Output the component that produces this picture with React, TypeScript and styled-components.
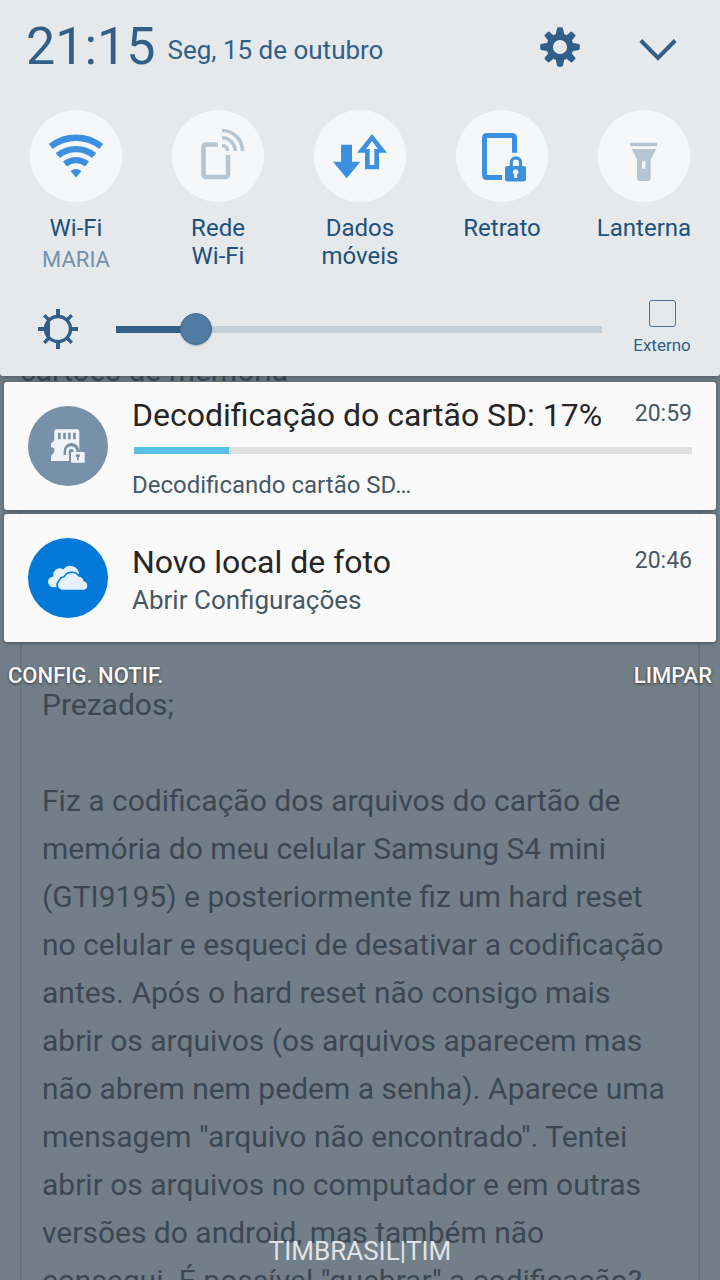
import React, { useState } from "react";
import styled, { createGlobalStyle } from "styled-components";

const GlobalStyle = createGlobalStyle`
  *, *::before, *::after { box-sizing: border-box; }
  body {
    margin: 0;
    background: #727f88;
    font-family: Roboto, "Noto Sans", sans-serif;
  }
  h1, h2, p { margin: 0; font-weight: 400; }
  button {
    padding: 0;
    border: 0;
    background: none;
    font: inherit;
    color: inherit;
    cursor: pointer;
  }
`;

const Screen = styled.div`
  position: relative;
  height: 100vh;
  overflow: hidden;
`;

/* The page that lies dimmed behind the shade */

const Article = styled.article`
  padding: 347px 20px 0;
  color: #3b4854;
`;

const ArticleTitle = styled.h1`
  font-size: 30px;
  line-height: 48px;
`;

const Post = styled.div`
  margin-top: 44px;
  padding: 240px 20px 24px;
  border: 2px solid #68747c;
  font-size: 30px;
  line-height: 48px;
`;

const Paragraph = styled.p`
  & + & { margin-top: 48px; }
`;

/* The notification shade */

const Shade = styled.div`
  position: absolute;
  inset: 0;
  display: flex;
  flex-direction: column;
`;

const QuickPanel = styled.header`
  display: flex;
  flex-direction: column;
  height: 376px;
  border-radius: 0 0 3px 3px;
  background: #e5e9ec;
  color: #315f88;
  box-shadow: 0 1px 6px rgba(40, 50, 58, 0.5);
`;

const TopBar = styled.div`
  display: flex;
  align-items: center;
  height: 94px;
  padding: 0 42px 0 26px;
`;

const Clock = styled.time`
  font-size: 52px;
  line-height: 60px;
`;

const DateText = styled.time`
  flex: 1;
  margin-left: 12px;
  padding-top: 6px;
  font-size: 26px;
  line-height: 32px;
`;

const IconButton = styled.button`
  display: block;
  width: 40px;
  height: 40px;
  & + & { margin-left: 58px; }
  svg { display: block; }
`;

const Tiles = styled.div`
  display: grid;
  grid-template-columns: repeat(5, 1fr);
  height: 186px;
  padding: 16px 5px 0;
`;

const Tile = styled.button<{ $active: boolean }>`
  display: flex;
  flex-direction: column;
  align-items: center;
  font-size: 24px;
  line-height: 28px;
  color: #20507c;
  svg {
    margin-bottom: 12px;
    border-radius: 50%;
    background: #f5f7f9;
    color: ${(p) => (p.$active ? "#3d90df" : "#b5c5d1")};
  }
`;

const TileNote = styled.span`
  margin-top: 4px;
  font-size: 22px;
  color: #7391ac;
`;

const BrightnessRow = styled.div`
  display: flex;
  align-items: center;
  height: 96px;
  padding: 2px 28px 0 38px;
`;

const Slider = styled.input`
  --fill: 0px;
  flex: 1;
  min-width: 0;
  height: 32px;
  margin: 0 30px 0 38px;
  appearance: none;
  background: linear-gradient(to right, #315f88 var(--fill), #c2ced8 var(--fill)) center / 100% 7px no-repeat;
  &::-webkit-slider-thumb {
    appearance: none;
    width: 32px;
    height: 32px;
    border: 1px solid #436b93;
    border-radius: 50%;
    background: #527ba4;
    box-shadow: 0 1px 2px rgba(40, 60, 80, 0.3);
  }
`;

const Outdoor = styled.label`
  display: flex;
  flex-direction: column;
  align-items: center;
  gap: 4px;
  width: 60px;
  font-size: 17px;
  line-height: 28px;
`;

const CheckBox = styled.input`
  appearance: none;
  width: 27px;
  height: 27px;
  margin: 0;
  border: 1px solid #4a729a;
  border-radius: 3px;
  &:checked { background: #527ba4; }
`;

const Notifications = styled.main`
  display: flex;
  flex-direction: column;
  gap: 4px;
  padding: 6px 4px 0;
`;

const Card = styled.section`
  display: flex;
  align-items: center;
  gap: 24px;
  height: 128px;
  padding: 0 24px;
  border-radius: 3px;
  background: #fafafa;
  box-shadow: 0 1px 4px rgba(40, 50, 58, 0.6);
  svg { flex: none; }
`;

const CardBody = styled.div`
  flex: 1;
  min-width: 0;
  padding-top: 4px;
  color: #465866;
`;

const CardHead = styled.div`
  display: flex;
  justify-content: space-between;
  align-items: flex-start;
`;

const CardTitle = styled.h2`
  font-size: 32px;
  line-height: 40px;
  color: #252525;
`;

const CardTime = styled.time`
  font-size: 23px;
  line-height: 38px;
`;

const CardText = styled.p<{ $large?: boolean }>`
  font-size: ${(p) => (p.$large ? 26 : 24)}px;
  line-height: ${(p) => (p.$large ? 36 : 32)}px;
`;

const Progress = styled.progress`
  display: block;
  width: calc(100% - 2px);
  height: 7px;
  margin: 12px 0 15px 2px;
  appearance: none;
  border: 0;
  &::-webkit-progress-bar { background: #e0e0e0; }
  &::-webkit-progress-value { background: #57c0e5; }
`;

const Actions = styled.div`
  display: flex;
  justify-content: space-between;
  padding: 20px 8px 0;
`;

const Action = styled.button`
  font-size: 22px;
  font-weight: 500;
  line-height: 28px;
  color: #fafafa;
  text-shadow: 0 1px 3px rgba(0, 0, 0, 0.6);
`;

const Carrier = styled.footer`
  margin-top: auto;
  padding-bottom: 13px;
  text-align: center;
  font-size: 26px;
  line-height: 32px;
  color: #e0e3e6;
`;

const GearIcon = () => (
  <svg width="40" height="40" viewBox="-20 -20 40 40" fill="currentColor" aria-hidden="true">
    {[0, 45, 90, 135, 180, 225, 270, 315].map((a) => (
      <path
        key={a}
        transform={`rotate(${a})`}
        d={a % 90 ? "M-4 -11 L-3.2 -18.5 Q-3 -19.3 -2 -19.3 H2 Q3 -19.3 3.2 -18.5 L4 -11Z" : "M-4.6 -11 L-2.9 -18.8 Q-2.7 -19.8 -1.8 -19.8 H1.8 Q2.7 -19.8 2.9 -18.8 L4.6 -11Z"}
      />
    ))}
    <circle r="10.3" fill="none" stroke="currentColor" strokeWidth="6.4" />
  </svg>
);

const ChevronIcon = () => (
  <svg width="40" height="40" viewBox="0 0 40 40" fill="none" stroke="currentColor" strokeWidth="4" aria-hidden="true">
    <path d="M2.8 13.5 L20 31 L37.2 13.5" />
  </svg>
);

const TileSvg = ({ children }: { children: React.ReactNode }) => (
  <svg width="92" height="92" viewBox="0 0 92 92" fill="none" aria-hidden="true">
    {children}
  </svg>
);

const WifiIcon = () => (
  <TileSvg>
    <g stroke="currentColor" strokeWidth="6.4">
      <path d="M20.8 36.5 A40.5 40.5 0 0 1 71.2 36.5" />
      <path d="M27.8 45.5 A29 29 0 0 1 64.2 45.5" />
      <path d="M35 54 A17.7 17.7 0 0 1 57 54" />
    </g>
    <path d="M46 67.5 L40.6 61 A8.5 8.5 0 0 1 51.4 61Z" fill="currentColor" />
  </TileSvg>
);

const HotspotIcon = () => (
  <TileSvg>
    <path d="M45.7 34.5 H34.5 Q31.5 34.5 31.5 37.5 V64 Q31.5 67 34.5 67 H53 Q56 67 56 64 V45" stroke="currentColor" strokeWidth="4.6" />
    <g stroke="currentColor" strokeWidth="3.6">
      <path d="M50 35.5 A5.5 5.5 0 0 1 55.5 41" />
      <path d="M50 27.8 A13.2 13.2 0 0 1 63.2 41" />
      <path d="M50 20.5 A20.5 20.5 0 0 1 70.5 41" />
    </g>
  </TileSvg>
);

const DataIcon = () => (
  <TileSvg>
    <g fill="currentColor" fillRule="evenodd">
      <path d="M27 34.7 H38 V51.7 H46.3 L32.7 68.3 L19 51.7 H27Z" />
      <path d="M58 24 L73 42.7 H65 V59.3 H51 V42.7 H43Z M58 31 L52 39 H55.7 V55 H60.3 V39 H64Z" />
    </g>
  </TileSvg>
);

const RotationLockIcon = () => (
  <TileSvg>
    <path d="M46 67.5 H31 Q28.5 67.5 28.5 65 V28 Q28.5 25.5 31 25.5 H56 Q58.5 25.5 58.5 28 V42.7" stroke="currentColor" strokeWidth="5" />
    <path d="M55.3 57 V52.5 A4.6 4.6 0 0 1 64.5 52.5 V57" stroke="currentColor" strokeWidth="3.2" />
    <rect x="49" y="56" width="21" height="15.5" rx="2.5" fill="currentColor" />
    <path d="M59.7 59.2 A2.8 2.8 0 0 1 61.2 64.4 V68 H58.2 V64.4 A2.8 2.8 0 0 1 59.7 59.2Z" fill="#f5f7f9" />
  </TileSvg>
);

const FlashlightIcon = () => (
  <TileSvg>
    <g fill="currentColor" fillRule="evenodd">
      <path d="M32 32.7 H59.3 V36.3 H32Z" />
      <path d="M33.7 39 H58.3 L52.7 49.3 V67.5 Q52.7 71 49.2 71 H42.5 Q39 71 39 67.5 V49.3Z M44 51.3 V58.7 H47.4 V51.3Z" />
    </g>
  </TileSvg>
);

const SunIcon = () => (
  <svg width="40" height="40" viewBox="-20 -20 40 40" fill="none" stroke="currentColor" aria-hidden="true">
    <circle r="12.5" strokeWidth="3.4" />
    <path d="M-8 -10.5 A13 13 0 0 0 -8 10.5Z" fill="currentColor" stroke="none" />
    {[0, 45, 90, 135, 180, 225, 270, 315].map((a) => (
      <path key={a} d={a % 90 ? "M0 -13 V-19.5" : "M0 -13 V-20"} strokeWidth={a % 90 ? 3.4 : 4} transform={`rotate(${a})`} />
    ))}
  </svg>
);

const SdCardIcon = () => (
  <svg width="80" height="80" viewBox="0 0 80 80" fill="none" aria-hidden="true">
    <circle cx="40" cy="40" r="40" fill="#7891a9" />
    <path d="M28.5 23.3 H49 Q51.3 23.3 51.3 25.6 V55 H23 V50 L26.3 46 V42.5 L23 41 V37.5 L26.3 34.5 V25.5 Q26.3 23.3 28.5 23.3Z" fill="#f0f3f7" />
    <path d="M31.3 26.7 V33.3 M36.5 26.7 V33.3 M41.4 26.7 V33.3 M46.4 26.7 V33.3" stroke="#7891a9" strokeWidth="2.6" />
    <path d="M35.6 49 V45.3 A7.8 7.8 0 0 1 51.3 44.5 H58 V58 H41 V49Z" fill="#7891a9" />
    <path d="M38 49 V45.5 A5.2 5.2 0 0 1 48.4 45.5 V47 H45.7 V45.5 A2.5 2.5 0 0 0 40.7 45.5 V49Z" fill="#f0f3f7" />
    <rect x="43" y="46" width="13.7" height="10.7" rx="1.2" fill="#f0f3f7" />
    <path d="M47.8 48.3 H51.8 V50.5 L50.6 51.3 V54.3 H49 V51.3 L47.8 50.5Z" fill="#7891a9" />
  </svg>
);

const CloudIcon = () => {
  const front = "M33.5 51.7 A4.8 4.8 0 0 1 31.6 43.3 A5.6 5.6 0 0 1 36.6 39.6 A7.8 7.8 0 0 1 50.2 38.4 A5.8 5.8 0 0 1 55.6 43.6 A4.1 4.1 0 0 1 56 51.7Z";
  return (
    <svg width="80" height="80" viewBox="0 0 80 80" aria-hidden="true">
      <circle cx="40" cy="40" r="40" fill="#0278d8" />
      <path d="M25.5 49.3 A5.4 5.4 0 0 1 25.5 38.4 A6.4 6.4 0 0 1 35.4 31.6 A8.6 8.6 0 0 1 51 35.5 L44 42 L32 49.3Z" fill="#e4f0fb" />
      <path d={front} fill="#0278d8" stroke="#0278d8" strokeWidth="3" />
      <path d={front} fill="#e4f0fb" />
    </svg>
  );
};

const tiles = [
  { label: "Wi-Fi", note: "MARIA", active: true, icon: <WifiIcon /> },
  { label: <>Rede<br />Wi-Fi</>, active: false, icon: <HotspotIcon /> },
  { label: <>Dados<br />móveis</>, active: true, icon: <DataIcon /> },
  { label: "Retrato", active: true, icon: <RotationLockIcon /> },
  { label: "Lanterna", active: false, icon: <FlashlightIcon /> },
];

export default function App() {
  const [brightness, setBrightness] = useState(14);
  return (
    <Screen>
      <GlobalStyle />
      <Article>
        <ArticleTitle>cartões de memória</ArticleTitle>
        <Post>
          <Paragraph>Prezados;</Paragraph>
          <Paragraph>
            Fiz a codificação dos arquivos do cartão de memória do meu celular Samsung S4 mini (GTI9195) e
            posteriormente fiz um hard reset no celular e esqueci de desativar a codificação antes. Após o hard
            reset não consigo mais abrir os arquivos (os arquivos aparecem mas não abrem nem pedem a senha).
            Aparece uma mensagem "arquivo não encontrado". Tentei abrir os arquivos no computador e em outras
            versões do android, mas também não consegui. É possível "quebrar" a codificação?
          </Paragraph>
        </Post>
      </Article>
      <Shade>
        <QuickPanel>
          <TopBar>
            <Clock>21:15</Clock>
            <DateText>Seg, 15 de outubro</DateText>
            <IconButton aria-label="Configurações"><GearIcon /></IconButton>
            <IconButton aria-label="Expandir"><ChevronIcon /></IconButton>
          </TopBar>
          <Tiles>
            {tiles.map((t, i) => (
              <Tile key={i} $active={t.active} aria-pressed={t.active}>
                {t.icon}
                <span>{t.label}</span>
                {t.note && <TileNote>{t.note}</TileNote>}
              </Tile>
            ))}
          </Tiles>
          <BrightnessRow>
            <SunIcon />
            <Slider
              type="range"
              aria-label="Brilho"
              value={brightness}
              onChange={(e) => setBrightness(Number(e.target.value))}
              style={{ "--fill": `${brightness}%` } as React.CSSProperties}
            />
            <Outdoor>
              <CheckBox type="checkbox" />
              Externo
            </Outdoor>
          </BrightnessRow>
        </QuickPanel>
        <Notifications>
          <Card>
            <SdCardIcon />
            <CardBody>
              <CardHead>
                <CardTitle>Decodificação do cartão SD: 17%</CardTitle>
                <CardTime>20:59</CardTime>
              </CardHead>
              <Progress value={17} max={100} aria-label="Decodificação do cartão SD" />
              <CardText>Decodificando cartão SD…</CardText>
            </CardBody>
          </Card>
          <Card>
            <CloudIcon />
            <CardBody>
              <CardHead>
                <CardTitle>Novo local de foto</CardTitle>
                <CardTime>20:46</CardTime>
              </CardHead>
              <CardText $large>Abrir Configurações</CardText>
            </CardBody>
          </Card>
        </Notifications>
        <Actions>
          <Action>CONFIG. NOTIF.</Action>
          <Action>LIMPAR</Action>
        </Actions>
        <Carrier>TIMBRASIL|TIM</Carrier>
      </Shade>
    </Screen>
  );
}
